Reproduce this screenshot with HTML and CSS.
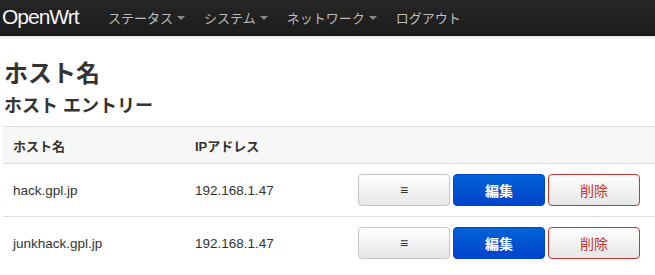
FILE: index.html
```html
<!DOCTYPE html>
<html lang="ja">
<head>
  <meta charset="UTF-8" />
  <meta name="viewport" content="width=device-width, initial-scale=1" />
  <title>ホスト名 - OpenWrt</title>
  <link rel="stylesheet" href="styles.css">
</head>
<body>
  <header class="navbar">
    <a class="brand" href="#">OpenWrt</a>
    <nav class="nav">
      <a href="#">ステータス<span class="caret"></span></a>
      <a href="#">システム<span class="caret"></span></a>
      <a href="#">ネットワーク<span class="caret"></span></a>
      <a href="#">ログアウト</a>
    </nav>
  </header>

  <main class="content">
    <h1>ホスト名</h1>
    <h2>ホスト エントリー</h2>

    <table class="hosts">
      <thead>
        <tr>
          <th class="col-name">ホスト名</th>
          <th class="col-ip">IPアドレス</th>
          <th></th>
        </tr>
      </thead>
      <tbody>
        <tr>
          <td>hack.gpl.jp</td>
          <td>192.168.1.47</td>
          <td>
            <div class="actions">
              <button class="btn">&#8801;</button>
              <button class="btn btn-edit">編集</button>
              <button class="btn btn-remove">削除</button>
            </div>
          </td>
        </tr>
        <tr>
          <td>junkhack.gpl.jp</td>
          <td>192.168.1.47</td>
          <td>
            <div class="actions">
              <button class="btn">&#8801;</button>
              <button class="btn btn-edit">編集</button>
              <button class="btn btn-remove">削除</button>
            </div>
          </td>
        </tr>
      </tbody>
    </table>
  </main>
</body>
</html>
```

FILE: styles.css
```css
body {
  margin: 0;
  background: #fff;
  color: #333;
  font-family: "Liberation Sans", "Noto Sans CJK JP", sans-serif;
  font-size: 13px;
  overflow: hidden;
}

.navbar {
  display: flex;
  align-items: center;
  height: 37px;
  padding-bottom: 2px;
  box-sizing: border-box;
  background: linear-gradient(#262626, #1c1c1c);
  border-bottom: 1px solid #e4e4e4;
  box-shadow: 0 1px 2px rgba(0,0,0,0.08);
}

.brand {
  padding: 0 0 0 2px;
  width: 106px;
  color: #f4f4f4;
  font-size: 21px;
  text-decoration: none;
  letter-spacing: -1px;
}

.nav {
  display: flex;
}

.nav a {
  display: flex;
  align-items: center;
  margin-right: 19px;
  color: #bdbdbd;
  font-size: 13px;
  text-decoration: none;
}

.caret {
  display: inline-block;
  margin-left: 4px;
  margin-top: 1px;
  border-top: 4px solid #8a8a8a;
  border-left: 4px solid transparent;
  border-right: 4px solid transparent;
}

.content {
  padding: 0 0 0 3px;
}

h1 {
  margin: 23px 0 0 1px;
  font-size: 24px;
  line-height: 28px;
  font-weight: bold;
}

h2 {
  margin: 6px 0 0 1px;
  font-size: 18px;
  line-height: 24px;
  font-weight: bold;
}

.hosts {
  width: 660px;
  margin-top: 8px;
  border-collapse: collapse;
}

.hosts th {
  height: 36px;
  padding: 0 10px;
  background: #f7f7f7;
  border-top: 1px solid #ddd;
  border-bottom: 1px solid #ddd;
  text-align: left;
  font-size: 13px;
  font-weight: bold;
}

.col-name {
  width: 162px;
}

.col-ip {
  width: 143px;
}

.hosts td {
  height: 52px;
  padding: 0 10px;
  border-bottom: 1px solid #ddd;
  font-size: 13.5px;
}

.hosts tbody tr:last-child td {
  border-bottom: none;
}

.actions {
  display: flex;
  gap: 3px;
}

.btn {
  width: 92px;
  height: 32px;
  border: 1px solid #c5c5c5;
  border-radius: 4px;
  background: linear-gradient(#fff, #e6e6e6);
  color: #333;
  font-family: "Liberation Sans", "Noto Sans CJK JP", sans-serif;
  font-size: 14px;
}

.btn-edit {
  border-color: #0044cc;
  background: linear-gradient(#0062d6, #0044cc);
  color: #fff;
  font-weight: bold;
}

.btn-remove {
  border-color: #cc3333;
  color: #c33;
}
```
